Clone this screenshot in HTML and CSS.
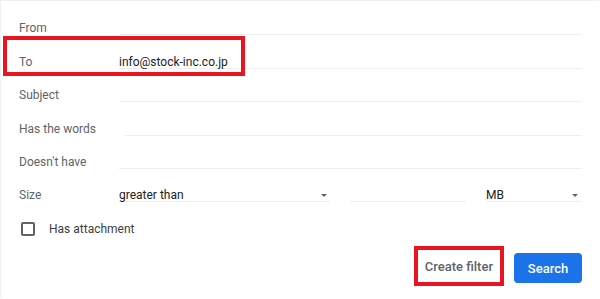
FILE: index.html
```html
<!DOCTYPE html>
<html lang="en">
<head>
    <meta charset="UTF-8">
    <meta name="viewport" content="width=device-width, initial-scale=1.0">
    <title>Search filter</title>
    <link rel="stylesheet" href="styles.css">
</head>
<body>
    <div class="panel">
        <div class="row">
            <span class="label">From</span>
            <div class="field"></div>
        </div>
        <div class="row marked">
            <span class="label">To</span>
            <div class="field">info@stock-inc.co.jp</div>
        </div>
        <div class="row">
            <span class="label">Subject</span>
            <div class="field"></div>
        </div>
        <div class="row">
            <span class="label">Has the words</span>
            <div class="field"></div>
        </div>
        <div class="row">
            <span class="label">Doesn't have</span>
            <div class="field"></div>
        </div>
        <div class="row">
            <span class="label">Size</span>
            <div class="field select size-op">greater than<span class="arrow"></span></div>
            <div class="field size-num"></div>
            <div class="field select size-unit">MB<span class="arrow"></span></div>
        </div>
        <div class="row check-row">
            <span class="checkbox"></span>
            <span class="check-label">Has attachment</span>
        </div>
        <div class="actions">
            <button class="button create marked-btn">Create filter</button>
            <button class="button search">Search</button>
        </div>
    </div>
</body>
</html>
```
FILE: styles.css
```css
body {
    margin: 0;
    font-family: Roboto, "Liberation Sans", Arial, sans-serif;
    background-color: #fff;
    color: #5f6368;
}
.panel {
    width: 599px;
    height: 298px;
    border-top: 1px solid #f0f0f0;
    border-left: 1px solid #f0f0f0;
    padding: 1px 18px 0 18px;
    box-sizing: border-box;
}
.row {
    position: relative;
    display: flex;
    align-items: flex-end;
    height: 33.4px;
    font-size: 12px;
}
.label {
    min-width: 72px;
    margin-right: 28px;
    line-height: 11px;
    padding-bottom: 1px;
    white-space: nowrap;
}
.field {
    flex: 1;
    height: 11px;
    line-height: 11px;
    border-bottom: 1px solid #eeeeee;
    color: #202124;
    font-size: 12px;
}
.row.marked::after {
    content: "";
    position: absolute;
    left: -16px;
    top: 1px;
    width: 242px;
    height: 40px;
    border: 4px solid #e8141f;
    box-sizing: border-box;
}
.select {
    position: relative;
}
.arrow {
    position: absolute;
    right: 3px;
    top: 4px;
    width: 0;
    height: 0;
    border-left: 3px solid transparent;
    border-right: 3px solid transparent;
    border-top: 3px solid #5f6368;
}
.size-op {
    flex: none;
    width: 211px;
}
.size-num {
    flex: none;
    width: 116px;
    margin-left: 20px;
}
.size-unit {
    flex: none;
    width: 95px;
    margin-left: 20px;
}
.check-row {
    align-items: center;
    height: 21px;
    margin-top: 16px;
}
.checkbox {
    width: 10px;
    height: 10px;
    border: 2px solid #5f6368;
    border-radius: 2px;
    margin-left: 2px;
}
.check-label {
    margin-left: 14px;
    color: #3c4043;
}
.actions {
    display: flex;
    justify-content: flex-end;
    align-items: flex-start;
    margin-top: 11px;
    margin-right: -1px;
}
.button {
    font-family: Roboto, "Liberation Sans", Arial, sans-serif;
    font-size: 13px;
    font-weight: 500;
    border: none;
    border-radius: 4px;
    cursor: pointer;
}
.create {
    height: 32px;
    padding: 0 7px;
    background-color: #fff;
    color: #5f6368;
}
.marked-btn {
    outline: 4px solid #e8141f;
    border-radius: 0;
}
.search {
    height: 30px;
    width: 68px;
    margin-left: 14px;
    margin-top: 3px;
    background-color: #1a73e8;
    color: #fff;
}
```
